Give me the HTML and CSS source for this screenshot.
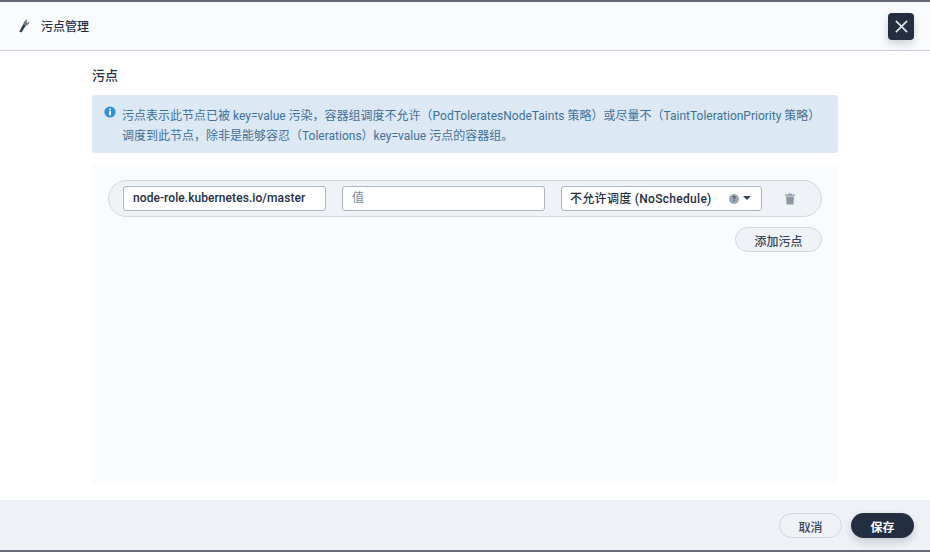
FILE: index.html
```html
<!DOCTYPE html>
<html lang="en">
<head>
  <meta charset="UTF-8" />
  <title>污点管理</title>
  <link rel="stylesheet" href="styles.css">
</head>
<body>
  <div class="backdrop-strip"></div>

  <div class="modal">
    <div class="modal-header">
      <svg class="wrench" viewBox="0 0 11 14" width="11" height="14">
        <path d="M0.4 12.4 L4.4 5 L7 6.2 L2.4 13.6 Z" fill="#2c3a50" />
        <path d="M4.4 5.6 C4.2 3 6 0.8 8.8 0.4 L7.4 2.8 L8.4 4 L10.2 2.2 C10.4 4.6 8.8 6.6 6.6 6.6 Z" fill="#6b788c" />
      </svg>
      <span class="modal-title">污点管理</span>
      <button type="button" class="close-btn" aria-label="close">
        <svg viewBox="0 0 12 12" width="13" height="13">
          <path d="M0.8 0.8 L11.2 11.2 M11.2 0.8 L0.8 11.2" stroke="#e9ebf0" stroke-width="1.4" fill="none" />
        </svg>
      </button>
    </div>

    <div class="modal-body">
      <div class="section-title">污点</div>

      <div class="alert">
        <svg class="info-icon" viewBox="0 0 12 12" width="12" height="12">
          <circle cx="6" cy="6" r="5.6" fill="#2f8fd0" />
          <rect x="5.1" y="5" width="1.8" height="4.4" fill="#fff" />
          <rect x="5.1" y="2.6" width="1.8" height="1.6" fill="#fff" />
        </svg>
        <p>污点表示此节点已被 key=value 污染，容器组调度不允许（PodToleratesNodeTaints 策略）或尽量不（TaintTolerationPriority 策略）调度到此节点，除非是能够容忍（Tolerations）key=value 污点的容器组。</p>
      </div>

      <div class="panel">
        <div class="taint-row">
          <input class="field field-key" type="text" value="node-role.kubernetes.io/master" />
          <input class="field" type="text" placeholder="值" />
          <div class="select">
            <span class="select-label">不允许调度 (NoSchedule)</span>
            <span class="help">?</span>
            <span class="caret"></span>
          </div>
          <svg class="trash" viewBox="0 0 10 12" width="10" height="12">
            <path d="M0 1.6 H3 L3.5 0.6 H6.5 L7 1.6 H10 V2.8 H0 Z M1 3.6 H9 L8.4 11.6 H1.6 Z" fill="#8d97a5" />
          </svg>
        </div>
        <div class="row-actions">
          <button type="button" class="btn-add">添加污点</button>
        </div>
      </div>
    </div>

    <div class="modal-footer">
      <button type="button" class="btn btn-cancel">取消</button>
      <button type="button" class="btn btn-save">保存</button>
    </div>
  </div>
</body>
</html>
```

FILE: styles.css
```css
* {
  box-sizing: border-box;
}
html, body {
  margin: 0;
  height: 552px;
  overflow: hidden;
}
body {
  display: flex;
  flex-direction: column;
  font-family: "Roboto", "Liberation Sans", "Noto Sans CJK SC", sans-serif;
  font-size: 12px;
  color: #242e42;
  background: #666b7a;
}
.backdrop-strip {
  height: 2px;
  flex: none;
}
.modal {
  height: 548px;
  flex: none;
  display: flex;
  flex-direction: column;
  background: #fff;
  border-radius: 3px 3px 0 0;
}
.modal-header {
  height: 49px;
  flex: none;
  display: flex;
  align-items: center;
  padding: 0 16px 0 19px;
  background: #f9fbfd;
  border-bottom: 1px solid #c9d2dc;
}
.wrench {
  margin-right: 11px;
}
.modal-title {
  flex: 1;
  font-size: 12px;
  line-height: 18px;
  font-weight: 500;
  padding-top: 1px;
}
.close-btn {
  width: 26px;
  height: 27px;
  padding: 0;
  display: flex;
  align-items: center;
  justify-content: center;
  border: none;
  border-radius: 4px;
  background: #242e42;
  box-shadow: 0 4px 8px rgba(36,46,66,0.2);
}
.modal-body {
  flex: 1;
  padding: 0 92px;
  display: flex;
  flex-direction: column;
}
.section-title {
  margin-top: 16px;
  height: 28px;
  font-size: 13px;
  line-height: 18px;
  font-weight: 500;
}
.alert {
  height: 58px;
  flex: none;
  display: flex;
  padding: 11px 12px 0;
  background: #dce9f4;
  border-radius: 3px;
  color: #3d7099;
}
.info-icon {
  flex: none;
  margin: 0 6px 0 0;
}
.alert p {
  margin: 0;
  line-height: 20px;
  font-size: 12px;
}
.panel {
  margin-top: 12px;
  height: 319px;
  flex: none;
  padding: 15px 16px;
  background: #f9fbfd;
  border-radius: 3px;
}
.taint-row {
  height: 37px;
  display: flex;
  align-items: center;
  gap: 16px;
  padding: 0 14px;
  background: #eff2f7;
  border: 1px solid #d1d7df;
  border-radius: 19px;
}
.field {
  width: 203px;
  height: 25px;
  padding: 0 9px 1px;
  font-family: inherit;
  font-size: 12px;
  color: #242e42;
  background: #fff;
  border: 1px solid #abb4c0;
  border-radius: 3px;
  outline: none;
}
.field-key {
  font-weight: 500;
  letter-spacing: 0.07px;
}
.field::placeholder {
  color: #79879c;
}
.select {
  width: 201px;
  height: 25px;
  display: flex;
  align-items: center;
  padding: 0 10px 2px 8px;
  background: #fff;
  border: 1px solid #abb4c0;
  border-radius: 3px;
  font-weight: 500;
}
.select-label {
  flex: 1;
  white-space: nowrap;
  letter-spacing: 0.3px;
}
.help {
  width: 10px;
  height: 10px;
  margin: 2px 4px 0 0;
  border-radius: 50%;
  background: #9aa5b4;
  color: #3c4657;
  font-size: 7px;
  line-height: 10px;
  font-weight: 700;
  text-align: center;
}
.caret {
  width: 0;
  height: 0;
  margin-top: 1px;
  border-left: 4.5px solid transparent;
  border-right: 4.5px solid transparent;
  border-top: 4px solid #36435c;
}
.trash {
  margin: 1px 0 0 7px;
}
.row-actions {
  display: flex;
  justify-content: flex-end;
  margin-top: 10px;
}
.btn-add {
  width: 87px;
  height: 25px;
  padding: 1px 0 0;
  font-family: inherit;
  font-size: 12px;
  font-weight: 500;
  color: #36435c;
  background: #eff2f7;
  border: 1px solid #d1d7df;
  border-radius: 13px;
}
.modal-footer {
  height: 50px;
  flex: none;
  display: flex;
  justify-content: flex-end;
  align-items: center;
  gap: 9px;
  padding: 1px 16px 0 0;
  background: #eff2f7;
}
.btn {
  width: 63px;
  height: 25px;
  padding: 2px 0 0;
  font-family: inherit;
  font-size: 12px;
  font-weight: 700;
  border-radius: 13px;
}
.btn-cancel {
  color: #36435c;
  background: #eff2f7;
  border: 1px solid #d1d7df;
  font-weight: 500;
}
.btn-save {
  color: #fff;
  background: #242e42;
  border: none;
  box-shadow: 0 4px 8px rgba(36,46,66,0.2);
}
```
